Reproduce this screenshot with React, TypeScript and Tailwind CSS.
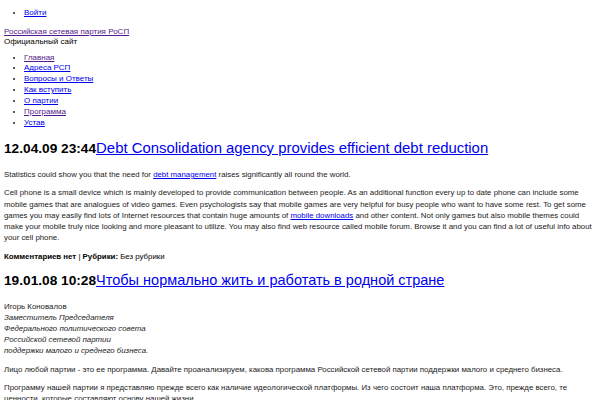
const nav = [
  { label: 'Главная', visited: true },
  { label: 'Адреса РСП', visited: false },
  { label: 'Вопросы и Ответы', visited: false },
  { label: 'Как вступить', visited: false },
  { label: 'О партии', visited: false },
  { label: 'Программа', visited: true },
  { label: 'Устав', visited: false },
];

function PostTitle({ date, title, size }: { date: string; title: string; size: string }) {
  return (
    <h2 className="flex items-baseline leading-[18px] text-black">
      <span className="text-[13.7px] font-bold">{date}</span>
      <a href="#" className={`${size} text-[#0000ee] underline`}>
        {title}
      </a>
    </h2>
  );
}

export default function App() {
  return (
    <div className="bg-white px-[4px] font-['Liberation_Sans',Arial,sans-serif] text-[8px] text-[#222]">
      {/* Login */}
      <ul className="mt-[8px] mb-[8px] list-disc pl-[20px] leading-[10.8px]">
        <li>
          <a href="#" className="text-[#0000ee] underline">Войти</a>
        </li>
      </ul>

      {/* Site header */}
      <div className="leading-[10.4px]">
        <a href="#" className="text-[#551a8b] underline">Российская сетевая партия РоСП</a>
        <div className="text-black">Официальный сайт</div>
      </div>

      {/* Menu */}
      <ul className="mt-[5px] list-disc pl-[20px] leading-[10.83px]">
        {nav.map((item) => (
          <li key={item.label}>
            <a
              href="#"
              className={item.visited ? 'text-[#551a8b] underline' : 'text-[#0000ee] underline'}
            >
              {item.label}
            </a>
          </li>
        ))}
      </ul>

      {/* Post 1 */}
      <div className="mt-[10.5px]">
        <PostTitle
          date="12.04.09 23:44"
          title="Debt Consolidation agency provides efficient debt reduction"
          size="text-[14.9px]"
        />
        <div className="mt-[11px] space-y-[7.3px] text-[7.85px] leading-[11.25px]">
          <p>
            Statistics could show you that the need for{' '}
            <a href="#" className="text-[#0000ee] underline">debt management</a> raises significantly all
            round the world.
          </p>
          <p>
            Cell phone is a small device which is mainly developed to provide communication between people. As
            an additional function every up to date phone can include some mobile games that are analogues of
            video games. Even psychologists say that mobile games are very helpful for busy people who want to
            have some rest. To get some games you may easily find lots of Internet resources that contain huge
            amounts of <a href="#" className="text-[#0000ee] underline">mobile downloads</a> and other content.
            Not only games but also mobile themes could make your mobile truly nice looking and more pleasant to
            utilize. You may also find web resource called mobile forum. Browse it and you can find a lot of
            useful info about your cell phone.
          </p>
          <p className="text-black">
            <strong>Комментариев нет</strong> | <strong>Рубрики:</strong> Без рубрики
          </p>
        </div>
      </div>

      {/* Post 2 */}
      <div className="mt-[9px]">
        <PostTitle
          date="19.01.08 10:28"
          title="Чтобы нормально жить и работать в родной стране"
          size="text-[14.5px]"
        />
        <div className="mt-[10.5px] space-y-[7.5px] text-[7.85px] leading-[11.1px]">
          <p>
            Игорь Коновалов
            <br />
            <em>
              Заместитель Председателя
              <br />
              Федерального политического совета
              <br />
              Российской сетевой партии
              <br />
              поддержки малого и среднего бизнеса.
            </em>
          </p>
          <p>
            Лицо любой партии - это ее программа. Давайте проанализируем, какова программа Российской сетевой
            партии поддержки малого и среднего бизнеса.
          </p>
          <p>
            Программу нашей партии я представляю прежде всего как наличие идеологической платформы. Из чего
            состоит наша платформа. Это, прежде всего, те ценности, которые составляют основу нашей жизни.
          </p>
        </div>
      </div>
    </div>
  );
}
